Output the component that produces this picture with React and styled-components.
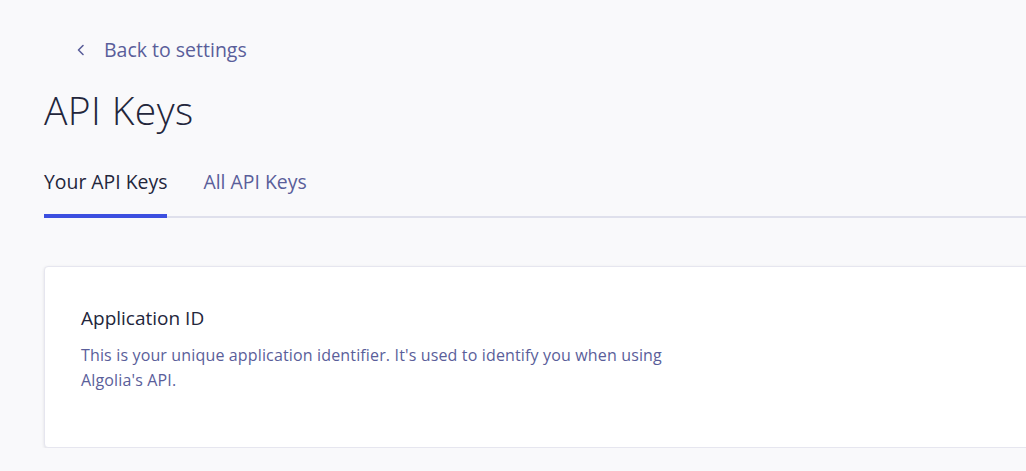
import React, { useState } from "react";
import styled, { createGlobalStyle } from "styled-components";

const GlobalStyle = createGlobalStyle`
  html, body {
    margin: 0;
    padding: 0;
    background: #f9f9fb;
    font-family: "Open Sans", "Liberation Sans", sans-serif;
    overflow: hidden;
  }
`;

const tabs = ["Your API Keys", "All API Keys"];

export default function App() {
  const [active, setActive] = useState(0);
  return (
    <Page>
      <GlobalStyle />
      <BackLink href="#">
        <svg width="12" height="12" viewBox="0 0 12 12" fill="none">
          <path d="M8 1.5L3.5 6 8 10.5" stroke="#5a5e9a" strokeWidth="1.6" strokeLinecap="round" strokeLinejoin="round" />
        </svg>
        <span>Back to settings</span>
      </BackLink>
      <Title>API Keys</Title>
      <TabBar>
        {tabs.map((t, i) => (
          <Tab key={t} $active={active === i} onClick={() => setActive(i)}>
            {t}
          </Tab>
        ))}
      </TabBar>
      <Card>
        <CardTitle>Application ID</CardTitle>
        <CardText>
          This is your unique application identifier. It's used to identify you when using
          Algolia's API.
        </CardText>
      </Card>
    </Page>
  );
}

const Page = styled.main`
  padding: 36px 0 0 44px;
  overflow: hidden;
`;

const BackLink = styled.a`
  display: inline-flex;
  align-items: center;
  gap: 17px;
  margin-left: 31px;
  color: #5a5e9a;
  text-decoration: none;
  font-size: 19.5px;
  line-height: 28px;
`;

const Title = styled.h1`
  margin: 21px 0 0;
  font-size: 39px;
  font-weight: 300;
  line-height: 50px;
  color: #23263b;
  letter-spacing: 0.4px;
`;

const TabBar = styled.nav`
  display: flex;
  gap: 36px;
  margin-top: 35px;
  margin-right: -10px;
  border-bottom: 2px solid #dfe0ec;
`;

const Tab = styled.button`
  background: none;
  border: none;
  padding: 0 0 20px;
  margin-bottom: -2px;
  font-family: inherit;
  font-size: 19.4px;
  line-height: 24px;
  color: ${(p) => (p.$active ? "#23263b" : "#5a5e9a")};
  border-bottom: 4px solid ${(p) => (p.$active ? "#3c4fe0" : "transparent")};
  cursor: pointer;
`;

const Card = styled.section`
  margin-top: 48px;
  margin-right: -10px;
  background: #fff;
  border: 1px solid #e6e6ef;
  border-radius: 4px;
  box-shadow: 0 1px 3px rgba(35, 38, 59, 0.12);
  padding: 38px 36px 52px;
  height: 90px;
`;

const CardTitle = styled.h2`
  margin: 0;
  font-size: 19px;
  font-weight: 400;
  line-height: 26px;
  color: #23263b;
`;

const CardText = styled.p`
  margin: 12px 0 0;
  max-width: 620px;
  font-size: 16px;
  letter-spacing: 0.15px;
  line-height: 25px;
  color: #5a5e9a;
`;
